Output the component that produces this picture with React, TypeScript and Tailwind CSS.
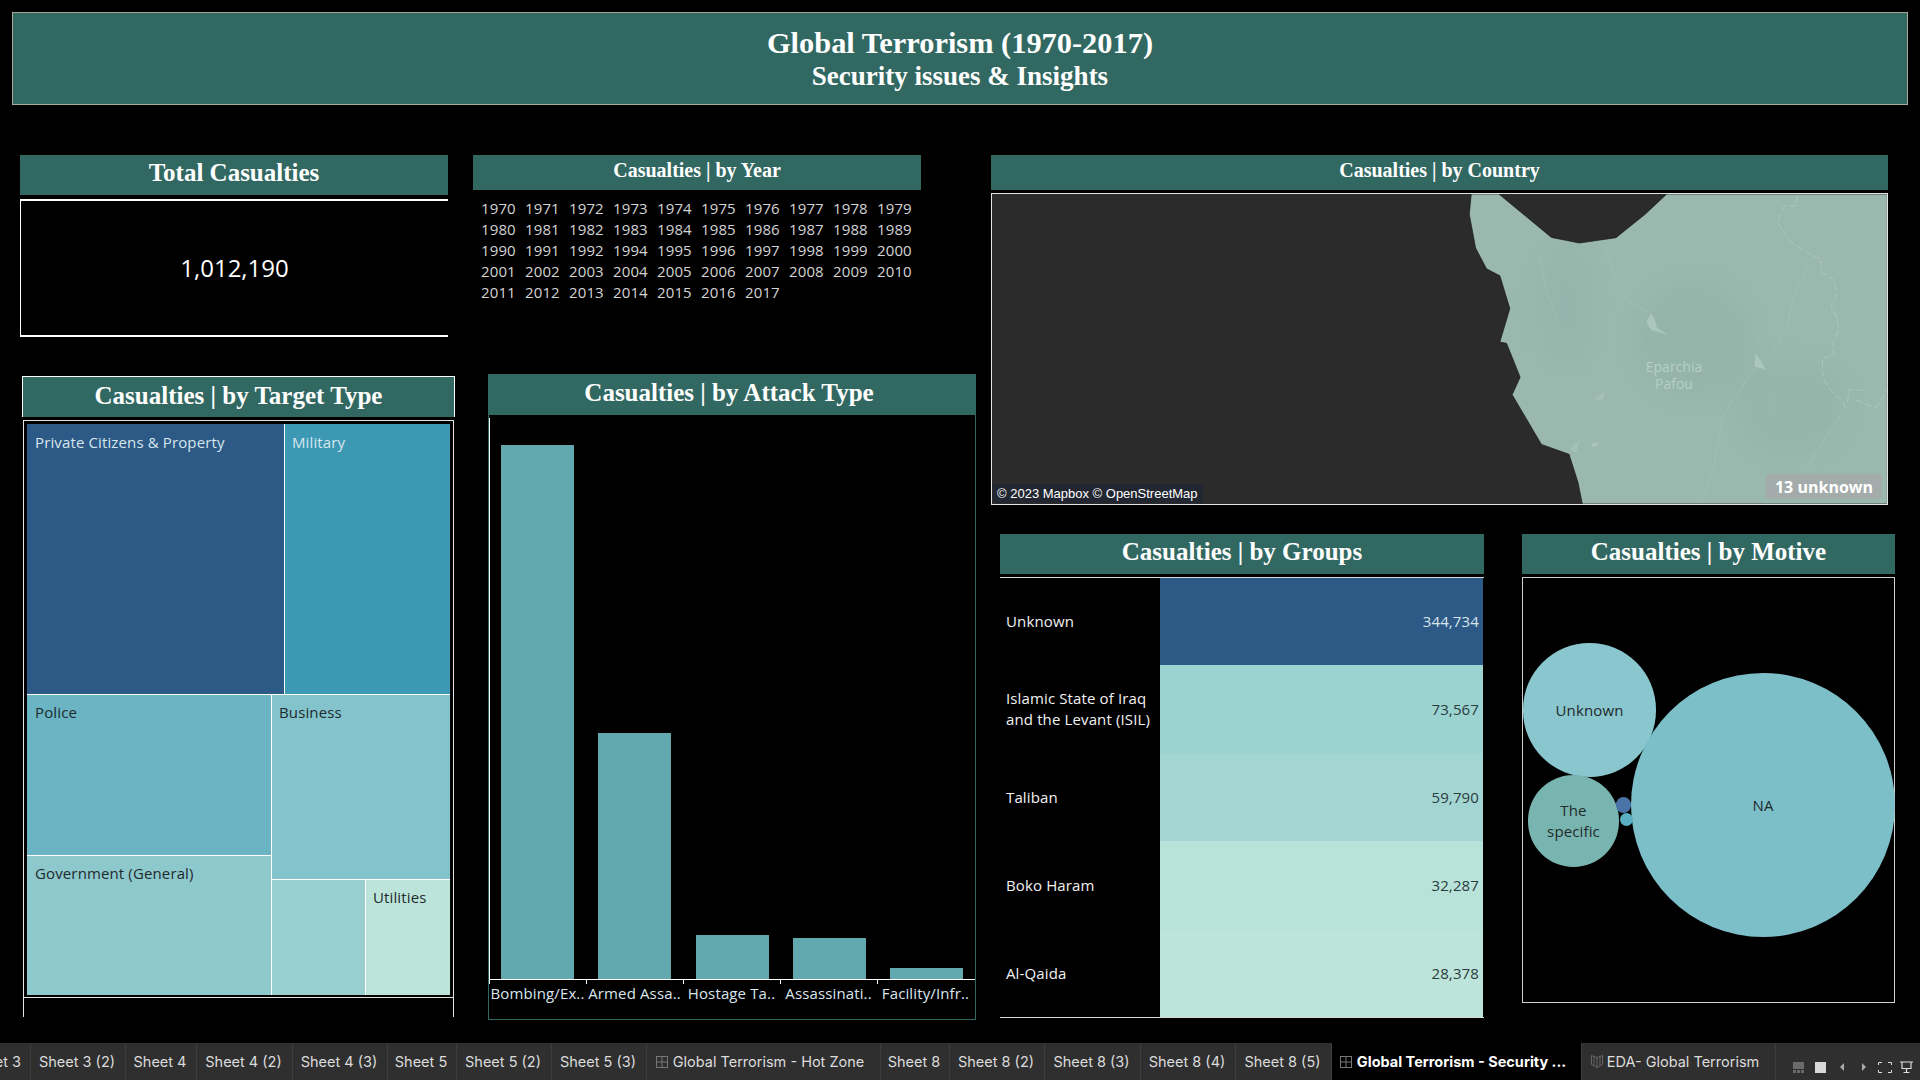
import React from "react";

const serif = "font-['Liberation_Serif',serif] font-bold text-white";
const book = "font-['Open_Sans',sans-serif] tracking-[0.13px]";

function Head({ children, size, className = "" }: { children: React.ReactNode; size: string; className?: string }) {
  return (
    <div className={`bg-[#326862] flex justify-center ${className}`}>
      <span className={`${serif} ${size} leading-none`}>{children}</span>
    </div>
  );
}

const years = [1970,1971,1972,1973,1974,1975,1976,1977,1978,1979,1980,1981,1982,1983,1984,1985,1986,1987,1988,1989,1990,1991,1992,1994,1995,1996,1997,1998,1999,2000,2001,2002,2003,2004,2005,2006,2007,2008,2009,2010,2011,2012,2013,2014,2015,2016,2017];

function Cell({ label, dark, className }: { label?: string; dark?: boolean; className: string }) {
  return (
    <div className={`${className} ${book} text-[15px] leading-[20px] ${dark ? "text-[#1f2a2c]" : "text-[#d8e6ee]"}`}>{label}</div>
  );
}

function Treemap() {
  return (
    <div className="w-[423px] h-[571px] flex flex-col bg-white gap-px">
      <div className="flex h-[270px] gap-px">
        <Cell label="Private Citizens & Property" className="w-[257px] pl-[8px] pt-[8px] bg-[#2c5985]" />
        <Cell label="Military" className="flex-1 pl-[7px] pt-[8px] bg-[#3d98b4]" />
      </div>
      <div className="flex flex-1 gap-px">
        <div className="w-[244px] flex flex-col gap-px">
          <Cell label="Police" dark className="h-[160px] pl-[8px] pt-[7px] bg-[#6ab4c4]" />
          <Cell label="Government (General)" dark className="flex-1 pl-[8px] pt-[7px] bg-[#8dc8cc]" />
        </div>
        <div className="flex-1 flex flex-col gap-px">
          <Cell label="Business" dark className="h-[184px] pl-[7px] pt-[7px] bg-[#82c3cc]" />
          <div className="flex-1 flex gap-px">
            <Cell className="w-[93px] bg-[#99cfcf]" />
            <Cell label="Utilities" dark className="flex-1 pl-[7px] pt-[7px] bg-[#bde4da]" />
          </div>
        </div>
      </div>
    </div>
  );
}

const bars = [
  { h: 534, l: "Bombing/Ex.." },
  { h: 246, l: "Armed Assa.." },
  { h: 44, l: "Hostage Ta.." },
  { h: 41, l: "Assassinati.." },
  { h: 11, l: "Facility/Infr.." },
];

function BarChart() {
  return (
    <div className="h-[605px] border-x border-b border-[#326862] flex flex-col">
      <div className="mt-[3px] h-[562px] border-l border-b border-white flex items-end pl-[11px] gap-[24px] w-[486px]">
        {bars.map((b, i) => (
          <div key={b.l} className={`w-[73px] bg-[#62a8af] ${i === 2 ? "ml-px" : ""}`} style={{ height: b.h }} />
        ))}
      </div>
      <div className="flex">
        {bars.map((b) => (
          <div key={b.l} className={`w-[97px] border-l border-white h-[4px] relative ${book} text-[15px] text-[#d8e6ee] whitespace-nowrap`}>
            <span className="absolute left-0 right-[1px] top-[3px] text-center leading-[20px]">{b.l}</span>
          </div>
        ))}
      </div>
    </div>
  );
}

const rows = [
  { n: "Unknown", v: "344,734", h: "h-[87px]", c: "bg-[#2c5985]", t: "text-[#d8e6ee]" },
  { n: "Islamic State of Iraq and the Levant (ISIL)", v: "73,567", h: "h-[88px]", c: "bg-[#9bd3d1]", t: "text-[#2b3c3d]" },
  { n: "Taliban", v: "59,790", h: "h-[88px]", c: "bg-[#a3d5d2]", t: "text-[#2b3c3d]" },
  { n: "Boko Haram", v: "32,287", h: "h-[89px]", c: "bg-[#b8e3d9]", t: "text-[#2b3c3d]" },
  { n: "Al-Qaida", v: "28,378", h: "h-[87px]", c: "bg-[#bce4da]", t: "text-[#2b3c3d]" },
];

function Groups() {
  return (
    <div className="w-[484px]">
      <Head size="text-[25px]" className="h-[40px] pt-[5px]">Casualties | by Groups</Head>
      <div className="mt-[3px] border-y border-[#d8d8d8] flex flex-col">
        {rows.map((r) => (
          <div key={r.n} className={`flex ${r.h}`}>
            <div className={`w-[160px] pl-[6px] flex items-center ${book} text-[15px] leading-[21px] text-[#f2f2f2] font-medium`}>
              <span className="w-[152px]">{r.n}</span>
            </div>
            <div className={`w-[323px] ${r.c} flex items-center justify-end pr-[4px] ${book} text-[15px] ${r.t}`}>{r.v}</div>
          </div>
        ))}
      </div>
    </div>
  );
}

function Bubbles() {
  return (
    <div className="relative mt-[3px] h-[426px] border border-[#d0d0d0]">
      <div className={`absolute left-0 top-[65px] w-[133px] h-[134px] rounded-full bg-[#89c6cd] flex items-center justify-center ${book} text-[15px] text-[#1f2a2c]`}>Unknown</div>
      <div className={`absolute left-[108px] top-[95px] w-[264px] h-[264px] rounded-full bg-[#7cbfc9] flex items-center justify-center ${book} text-[15px] text-[#1f2a2c]`}>NA</div>
      <div className={`absolute left-[5px] top-[197px] w-[91px] h-[92px] rounded-full bg-[#79b5b0] flex items-center justify-center text-center ${book} text-[15px] leading-[21px] text-[#1f2a2c]`}>The<br />specific</div>
      <div className="absolute left-[93px] top-[219px] w-[15px] h-[16px] rounded-full bg-[#4a74a8]" />
      <div className="absolute left-[97px] top-[235px] w-[13px] h-[13px] rounded-full bg-[#5bafc3]" />
    </div>
  );
}

const land = "M-326 9L-332 70L-313 172L-280 235L-240 256L-210 355L-240 456L-220 460L-179 562L-203 615L-115 765L-32 795L-5 880L8 945L925 945L925 9L262 9L197 70L109 141L-1 157L-85 140L-243 9Z";

function MapPanel() {
  return (
    <div className="relative mt-[3px] h-[312px] border border-[#e4e4e4] overflow-hidden bg-[#2b2b2b]">
      <svg className="absolute inset-0 w-full h-full" viewBox="-1767 9 2691 936" preserveAspectRatio="none">
        <defs>
          <filter id="soft" x="-50%" y="-50%" width="200%" height="200%"><feGaussianBlur stdDeviation="30" /></filter>
          <clipPath id="landClip"><path d={land} /></clipPath>
        </defs>
        <path fill="#9ab8ae" stroke="#151515" strokeWidth="2" d={land} />
        <g clipPath="url(#landClip)">
          <ellipse cx="340" cy="450" rx="170" ry="170" fill="#90aea5" opacity="0.4" filter="url(#soft)" />
          <ellipse cx="640" cy="650" rx="160" ry="140" fill="#90aea5" opacity="0.35" filter="url(#soft)" />
          <ellipse cx="-40" cy="350" rx="90" ry="180" fill="#90aea5" opacity="0.3" filter="url(#soft)" />
          <g fill="none" stroke="#abc6bd" strokeWidth="3" strokeDasharray="22 8">
            <path d="M655 15L650 45L615 45L595 95L630 150L690 190L725 205L728 245L765 270L772 320L755 350L770 375L780 420L760 460L765 495L730 505L730 550L745 590L790 635L800 655" />
            <path d="M805 640L810 600L860 602M830 630L890 655L910 625L922 600" />
          </g>
          <g fill="none" stroke="#a6c1b8" strokeWidth="2">
            <path d="M75 170L100 250L150 340L215 370" />
            <path d="M690 220L640 320L625 410L580 490L530 530L430 680L400 850L370 930" />
            <path d="M795 660L730 760L680 840" />
            <path d="M-120 200L-100 300L-70 380M-160 520L-110 470" />
          </g>
          <g fill="#abc6bd">
            <path d="M215 370L200 395L215 420L265 435L232 412L225 385Z" />
            <path d="M530 490L525 530L560 540L545 515Z" />
            <path d="M35 762L58 758L50 770L38 772Z" />
            <path d="M45 625L75 605L72 630L50 632Z" opacity="0.5" />
            <path d="M-30 780L0 750L-10 790Z" opacity="0.6" />
          </g>
        </g>
      </svg>
      <div className="absolute left-[632px] top-[164px] w-[100px] text-center font-['Open_Sans',sans-serif] text-[14px] leading-[17px] text-[#b5cfc6]">Eparchia<br />Pafou</div>
      <div className="absolute left-[1px] bottom-[1px] h-[19px] w-[210px] bg-[#222631] flex items-center pl-[4px] pt-px font-['Liberation_Sans',sans-serif] text-[13px] text-white">© 2023 Mapbox © OpenStreetMap</div>
      <div className="absolute right-[5px] bottom-[5px] h-[25px] w-[116px] rounded-[3px] bg-[#a3acaa] flex items-center justify-center font-['Open_Sans',sans-serif] text-[16px] font-bold text-white">13 unknown</div>
    </div>
  );
}

const tabs: { t: string; w: string; icon?: "dash" | "story"; active?: boolean }[] = [
  { t: "Sheet 3", w: "w-[31px]" },
  { t: "Sheet 3 (2)", w: "w-[95px]" },
  { t: "Sheet 4", w: "w-[71px]" },
  { t: "Sheet 4 (2)", w: "w-[96px]" },
  { t: "Sheet 4 (3)", w: "w-[95px]" },
  { t: "Sheet 5", w: "w-[69px]" },
  { t: "Sheet 5 (2)", w: "w-[95px]" },
  { t: "Sheet 5 (3)", w: "w-[95px]" },
  { t: "Global Terrorism - Hot Zone", w: "w-[234px]", icon: "dash" },
  { t: "Sheet 8", w: "w-[69px]" },
  { t: "Sheet 8 (2)", w: "w-[95px]" },
  { t: "Sheet 8 (3)", w: "w-[96px]" },
  { t: "Sheet 8 (4)", w: "w-[95px]" },
  { t: "Sheet 8 (5)", w: "w-[96px]" },
  { t: "Global Terrorism - Security ...", w: "w-[250px]", icon: "dash", active: true },
  { t: "EDA- Global Terrorism", w: "w-[194px]", icon: "story" },
];

function Tabs() {
  return (
    <div className="h-[37px] bg-[#2f2f2f] flex items-stretch">
      {tabs.map((x, i) => (
        <div key={x.t} className={`${x.w} shrink-0 flex items-center overflow-hidden border-r border-[#3d3d3d] ${i === 0 ? "justify-end pr-[9px]" : x.icon ? "justify-center pr-[7px]" : "justify-center pr-[2px]"} ${x.active ? "bg-black font-bold text-white" : "text-[#dcdcdc]"} font-['Inter',sans-serif] text-[14.5px] whitespace-nowrap`}>
          {x.icon === "dash" && (
            <svg width="12" height="12" viewBox="0 0 12 12" className="mr-[5px] shrink-0" fill="none" stroke="#777"><rect x="0.5" y="0.5" width="11" height="11" /><path d="M0.5 6H11.5M6 0.5V11.5" /></svg>
          )}
          {x.icon === "story" && (
            <svg width="12" height="13" viewBox="0 0 12 13" className="mr-[4px] shrink-0" fill="none" stroke="#666"><path d="M0.5 0.5L3 1.5L6 2.5L9 1.5L11.5 0.5V9.5L6 12.5L0.5 9.5Z" /><path d="M6 2.5V12.5M3 1.5V10.5M9 1.5V10.5" /></svg>
          )}
          <span className={i === 0 ? "shrink-0" : ""}>{x.t}</span>
        </div>
      ))}
      <div className="flex-1 flex items-end justify-end pr-[7px] pb-[7px]">
        <svg width="11" height="11" viewBox="0 0 11 11"><rect width="11" height="7" fill="#6a6a6a" /><path d="M0 8H3V11H0ZM4 8H7V11H4ZM8 8H11V11H8Z" fill="#6a6a6a" /></svg>
        <svg width="11" height="11" viewBox="0 0 11 11" className="ml-[11px]"><rect width="11" height="11" fill="#d8d8d8" /></svg>
        <svg width="4" height="8" viewBox="0 0 4 8" className="ml-[14px] mb-[2px]"><path d="M4 0L0 4L4 8Z" fill="#aaa" /></svg>
        <svg width="4" height="8" viewBox="0 0 4 8" className="ml-[18px] mb-[2px]"><path d="M0 0L4 4L0 8Z" fill="#aaa" /></svg>
        <svg width="14" height="11" viewBox="0 0 14 11" fill="none" stroke="#ddd" className="ml-[12px]"><path d="M0.5 3V0.5H4M10 0.5H13.5V3M13.5 8V10.5H10M4 10.5H0.5V8" /></svg>
        <svg width="13" height="12" viewBox="0 0 13 12" fill="none" stroke="#ddd" strokeWidth="1.2" className="ml-[8px]"><path d="M0 1H13M2 1V7.5H11V1M6.5 7.5V11M3.5 11.5H9.5" /></svg>
      </div>
    </div>
  );
}

export default function App() {
  return (
    <div className="w-[1920px] h-[1080px] bg-black flex flex-col overflow-hidden">
      <div className="mx-[12px] mt-[12px] h-[93px] bg-[#326862] border border-[#a8a89a] flex flex-col items-center pt-[13px]">
        <div className={`${serif} text-[30.4px] leading-[34px]`}>Global Terrorism (1970-2017)</div>
        <div className={`${serif} text-[27px] leading-[32px]`}>Security issues &amp; Insights</div>
      </div>

      <div className="flex-1 flex">
        <div className="w-[976px] flex flex-col">
          <div className="flex pt-[50px] h-[232px] items-start">
            <div className="ml-[20px] w-[428px]">
              <Head size="text-[25px]" className="h-[40px] pt-[5px]">Total Casualties</Head>
              <div className={`mt-[4px] h-[138px] border-t-2 border-b-2 border-l border-white flex items-center justify-center font-['Open_Sans',sans-serif] text-[24px] text-white`}>1,012,190</div>
            </div>
            <div className="ml-[25px] w-[448px]">
              <Head size="text-[20px]" className="h-[35px] pt-[5px]">Casualties | by Year</Head>
              <div className={`mt-[8px] pl-[8px] grid grid-cols-[repeat(10,44px)] auto-rows-[21px] items-center ${book} text-[15px] text-[#d4d4d4]`}>
                {years.map((y) => <span key={y}>{y}</span>)}
              </div>
            </div>
          </div>

          <div className="flex items-start">
            <div className="ml-[22px] mt-[39px] w-[433px] h-[638px]">
              <Head size="text-[25px]" className="h-[41px] pt-[6px] border-x border-t border-white">Casualties | by Target Type</Head>
              <div className="mx-px h-[597px] border-x border-[#e4e4e4]">
                <div className="mt-[3px] h-[578px] border-y border-[#e4e4e4] pt-[3px] flex justify-center">
                  <Treemap />
                </div>
              </div>
            </div>
            <div className="ml-[33px] mt-[37px] w-[488px]">
              <Head size="text-[25px]" className="h-[41px] pt-[6px] pr-[6px]">Casualties | by Attack Type</Head>
              <BarChart />
            </div>
          </div>
        </div>

        <div className="w-[944px] flex flex-col">
          <div className="ml-[15px] mt-[50px] w-[897px]">
            <Head size="text-[20px]" className="h-[35px] pt-[5px]">Casualties | by Country</Head>
            <MapPanel />
          </div>
          <div className="flex mt-[29px] items-start">
            <div className="ml-[24px]"><Groups /></div>
            <div className="ml-[38px] w-[373px]">
              <Head size="text-[25px]" className="h-[40px] pt-[5px]">Casualties | by Motive</Head>
              <Bubbles />
            </div>
          </div>
        </div>
      </div>

      <Tabs />
    </div>
  );
}
